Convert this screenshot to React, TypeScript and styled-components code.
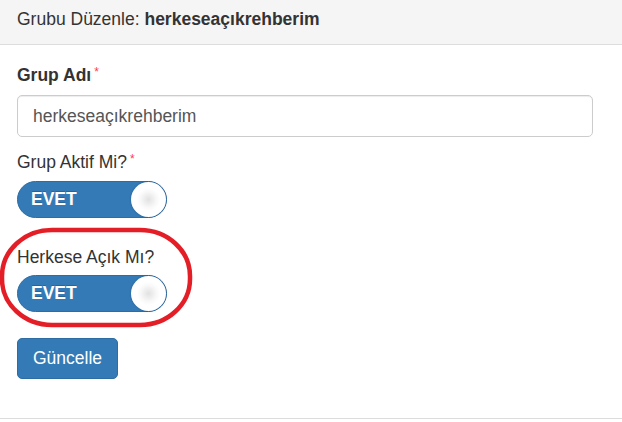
import React from "react";
import styled, { createGlobalStyle } from "styled-components";

const Global = createGlobalStyle`
  html, body { margin: 0; padding: 0; background: #fff; }
  body {
    font-family: "Liberation Sans", Arial, Helvetica, sans-serif;
    font-size: 17.5px;
    line-height: 25px;
    color: #333;
  }
  * { box-sizing: border-box; }
`;

const Panel = styled.div`
  position: relative;
  width: 622px;
  border-bottom: 1px solid #dcdcdc;
  background: #fff;
`;

const Heading = styled.div`
  height: 45px;
  padding: 6.5px 17px 0;
  background: #f5f5f5;
  border-bottom: 1px solid #dddddd;
  color: #333;
`;

const Strong = styled.b`
  font-weight: 700;
`;

const Body = styled.form`
  padding: 17.5px 29px 39px 17px;
`;

const Group = styled.div<{ $gap: number }>`
  margin-bottom: ${(p) => p.$gap}px;
`;

const Label = styled.label<{ $bold?: boolean; $mb: number }>`
  display: block;
  font-weight: ${(p) => (p.$bold ? 700 : 400)};
  margin-bottom: ${(p) => p.$mb}px;
  color: #333;
`;

const Req = styled.span`
  color: #ff3b4e;
  font-size: 12px;
  font-weight: 400;
  margin-left: 3px;
  vertical-align: 5px;
  line-height: 0;
`;

const Input = styled.input`
  display: block;
  width: 100%;
  height: 42px;
  padding: 0 15px;
  border: 1px solid #cccccc;
  border-radius: 5px;
  background: #fff;
  color: #555;
  font-family: inherit;
  font-size: 17.5px;
  line-height: 25px;
  box-shadow: inset 0 1px 1px rgba(0, 0, 0, 0.075);
  outline: none;
`;

const Switch = styled.div`
  display: flex;
  align-items: center;
  justify-content: space-between;
  width: 150px;
  height: 37px;
  border-radius: 19px;
  background: #337ab7;
  border: 1px solid #2e6da4;
`;

const SwitchText = styled.span`
  padding-left: 13px;
  color: #fff;
  font-weight: 700;
  font-size: 17.5px;
  text-shadow: 0 -1px 0 rgba(0, 0, 0, 0.2);
`;

const Knob = styled.span`
  width: 35px;
  height: 35px;
  border-radius: 50%;
  background: radial-gradient(circle at 50% 50%, #e2e2e2 0, #ebebeb 14%, #f8f8f8 32%, #ffffff 48%);
  box-shadow: 0 0 2px rgba(0, 0, 0, 0.3);
`;

const Button = styled.button`
  display: inline-block;
  height: 41px;
  padding: 7px 15px;
  border: 1px solid #2e6da4;
  border-radius: 5px;
  background: #337ab7;
  color: #fff;
  font-family: inherit;
  font-size: 17.5px;
  line-height: 25px;
`;

const Annotation = styled.svg`
  position: absolute;
  left: 0;
  top: 226px;
  pointer-events: none;
`;

export default function App() {
  return (
    <>
      <Global />
      <Panel>
        <Heading>
          Grubu Düzenle: <Strong>herkeseaçıkrehberim</Strong>
        </Heading>
        <Body onSubmit={(e) => e.preventDefault()}>
          <Group $gap={12.5}>
            <Label $bold $mb={7.5}>
              Grup Adı<Req>*</Req>
            </Label>
            <Input defaultValue="herkeseaçıkrehberim" />
          </Group>
          <Group $gap={26.5}>
            <Label $mb={6.5}>
              Grup Aktif Mi?<Req>*</Req>
            </Label>
            <Switch>
              <SwitchText>EVET</SwitchText>
              <Knob />
            </Switch>
          </Group>
          <Group $gap={25.5}>
            <Label $mb={5.5}>Herkese Açık Mı?</Label>
            <Switch>
              <SwitchText>EVET</SwitchText>
              <Knob />
            </Switch>
          </Group>
          <Button type="submit">Güncelle</Button>
        </Body>
        <Annotation width="196" height="104" viewBox="0 0 196 104">
          <rect x="2" y="4" width="188" height="95" rx="50" ry="46" fill="none" stroke="#e41e26" strokeWidth="4.5" />
        </Annotation>
      </Panel>
    </>
  );
}
